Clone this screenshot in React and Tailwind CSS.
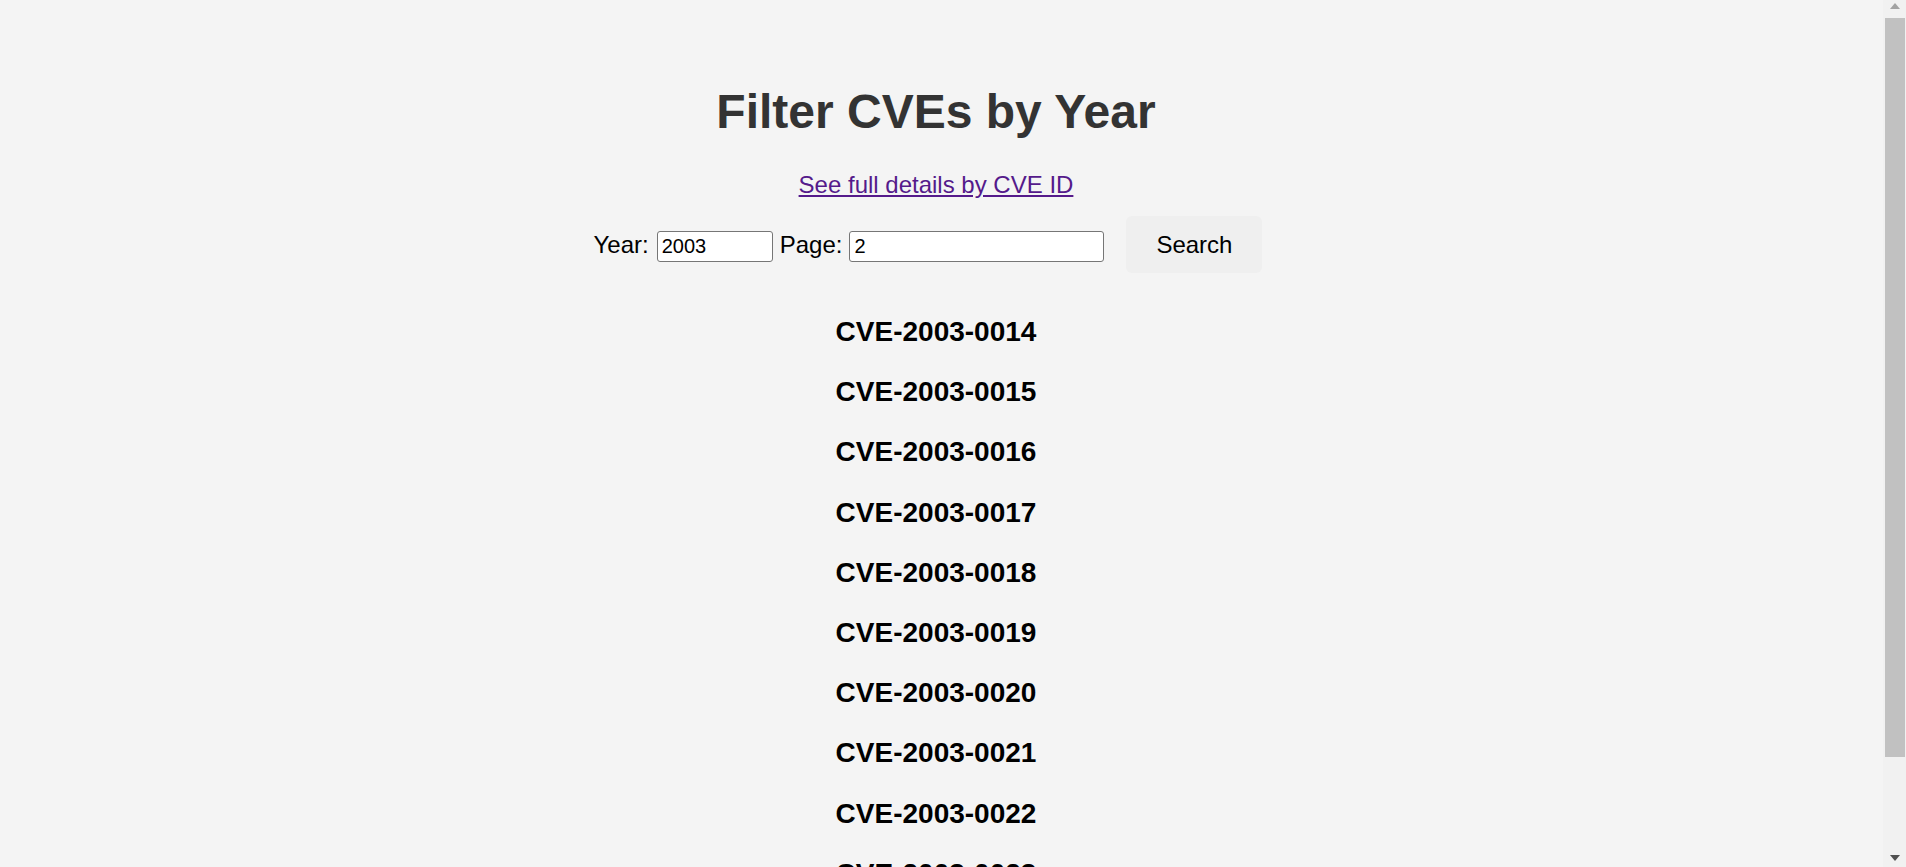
import React, { useState } from 'react';

const FIRST_ID = 14;
const PAGE_COUNT = 11;

const pad = (n) => String(n).padStart(4, '0');

// nakreslený posuvník okna (jen vzhled)
const ScrollBar = () => (
  <div className="fixed top-0 right-0 h-screen w-[23px] bg-[#f1f1f1] flex flex-col items-center">
    <svg width="10" height="6" viewBox="0 0 10 6" className="mt-[3px] ml-[1px]">
      <polygon points="5,0 10,6 0,6" fill="#a3a3a3" />
    </svg>
    <div className="mt-[9px] ml-[1px] w-[20px] h-[739px] bg-[#c1c1c1]" />
    <div className="flex-1" />
    <svg width="10" height="6" viewBox="0 0 10 6" className="mb-[6px] ml-[1px]">
      <polygon points="0,0 10,0 5,6" fill="#505050" />
    </svg>
  </div>
);

const App = () => {
  const [year, setYear] = useState('2003');
  const [page, setPage] = useState('2');

  const ids = Array.from({ length: PAGE_COUNT }, (_, i) => `CVE-${year}-${pad(FIRST_ID + i)}`);

  return (
    <div className="min-h-screen bg-[#f4f4f4] font-['Liberation_Sans',Arial,sans-serif] text-black">
      <div className="flex flex-col items-center pt-[84px] pb-[30px] pr-[34px]">
        <h1 className="text-[48px] leading-[55px] font-bold text-[#333333]">Filter CVEs by Year</h1>

        <a href="#" className="mt-[32px] text-[24px] leading-[28px] text-[#551a8b] underline">
          See full details by CVE ID
        </a>

        {/* formulář */}
        <div className="mt-[17px] flex items-center text-[24px] mr-[16px]">
          <label className="leading-[28px]">Year:</label>
          <input
            type="text"
            value={year}
            onChange={e => setYear(e.target.value)}
            className="ml-[8px] mt-[4px] w-[116px] h-[31px] px-[4px] text-[20px] leading-[23px] bg-white border border-[#767676] rounded-[3px] outline-none"
          />
          <label className="ml-[7px] leading-[28px]">Page:</label>
          <input
            type="text"
            value={page}
            onChange={e => setPage(e.target.value)}
            className="ml-[7px] mt-[4px] w-[255px] h-[31px] px-[4px] text-[20px] leading-[23px] bg-white border border-[#767676] rounded-[3px] outline-none"
          />
          <button className="ml-[22px] w-[136px] h-[57px] bg-[#efefef] rounded-[6px] text-[24px] leading-[28px]">
            Search
          </button>
        </div>

        <div className="mt-[43px] flex flex-col items-center gap-[28px]">
          {ids.map(id => (
            <h3 key={id} className="text-[28px] leading-[32.2px] font-bold">{id}</h3>
          ))}
        </div>
      </div>
      <ScrollBar />
    </div>
  );
};

export default App;
